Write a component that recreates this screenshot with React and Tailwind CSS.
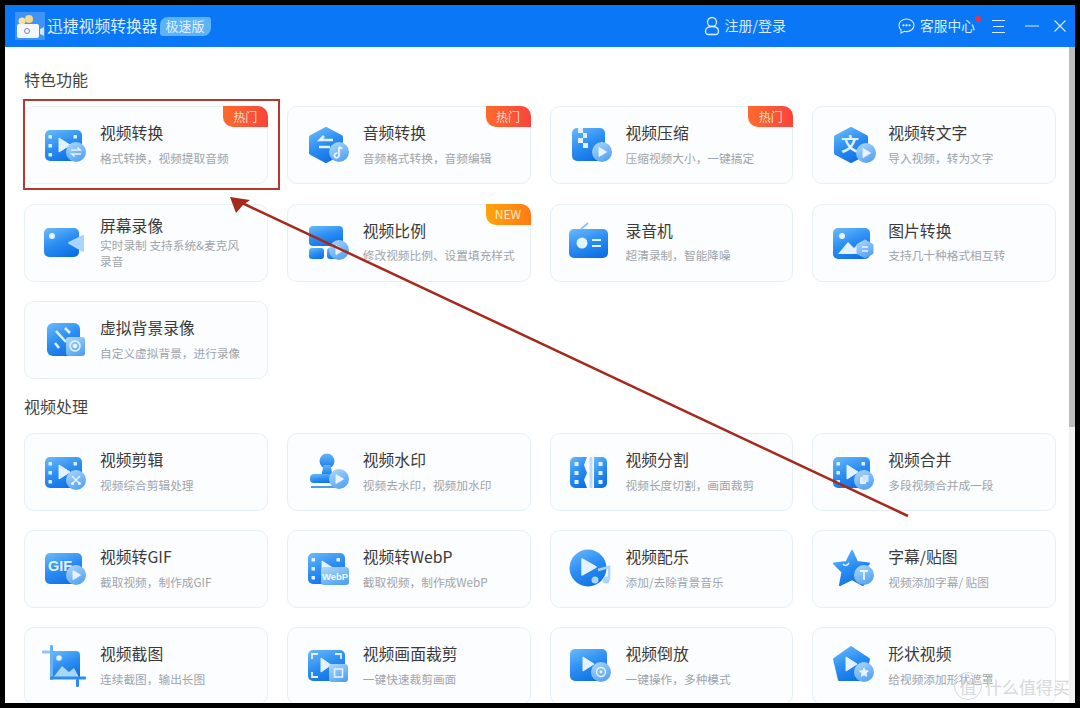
import React from "react";

const W = "#e4f1fe";
const Svg = ({ children }) => (
  <svg viewBox="0 0 44 44" className="w-[44px] h-[44px] shrink-0 overflow-visible">{children}</svg>
);
const B = ({ x = 33, y = 29, r = 10, children }) => (
  <g>
    <circle cx={x} cy={y} r={r} fill="url(#badge)" />
    {children}
  </g>
);
const BPlay = ({ x = 33, y = 29 }) => <path d={`M${x - 3} ${y - 4.5}L${x + 4.5} ${y}L${x - 3} ${y + 4.5}Z`} fill="#e8f4ff" strokeLinejoin="round" stroke="#e8f4ff" strokeWidth="1" />;
const Film = ({ y = 7 }) => (
  <g>
    <rect x="2" y={y} width="37" height="31" rx="5" fill="url(#main)" />
    {[7, 16, 25].map((d) => <rect key={d} x="5.5" y={y + d - 2} width="3.5" height="3.5" rx=".5" fill={W} />)}
    <rect x="30.5" y={y + 5} width="3.5" height="3.5" rx=".5" fill={W} />
    <path d={`M16 ${y + 8}L27 ${y + 15}L16 ${y + 22}Z`} fill={W} stroke={W} strokeLinejoin="round" />
  </g>
);
const Hex = () => <path d="M20 6L35 14V30L20 38L5 30V14Z" fill="url(#main)" stroke="url(#main)" strokeWidth="4" strokeLinejoin="round" />;

const icons = {
  convert: <Svg><Film /><B><path d="M28 27h9l-2.5-2.5M38 31h-9l2.5 2.5" fill="none" stroke="#e8f4ff" strokeWidth="1.6" /></B></Svg>,
  audio: <Svg><Hex /><path d="M27 17H14l4-4M13 24h11" fill="none" stroke={W} strokeWidth="2.6" /><B><path d="M33 24v8.5a2.3 2.3 0 1 1-1.6-2.2M33 24l3.5 1.5" fill="none" stroke="#e8f4ff" strokeWidth="1.8" /></B></Svg>,
  compress: <Svg><rect x="3" y="5" width="33" height="33" rx="5" fill="url(#main)" /><path d="M9 5h5v5h4v5h-4v5h5v5h-5v-5H9v-5h5v-5H9Z" fill={W} /><B><BPlay /></B></Svg>,
  text: <Svg><Hex /><text x="19" y="28" textAnchor="middle" fontSize="18" fontWeight="700" fill={W} fontFamily="'Noto Sans CJK SC',sans-serif">文</text><B x={35} y={30}><BPlay x={35} y={30} /></B></Svg>,
  screen: <Svg><rect x="1" y="7" width="35" height="29" rx="5" fill="url(#main)" /><circle cx="9" cy="15" r="3" fill={W} /><path d="M26 22L40 15V30Z" fill="#a9d4fb" stroke="#a9d4fb" strokeWidth="2" strokeLinejoin="round" /></Svg>,
  ratio: <Svg><rect x="3" y="5" width="34" height="20" rx="4" fill="url(#main)" /><rect x="3" y="27" width="15" height="11" rx="3" fill="url(#main)" /><rect x="21" y="27" width="16" height="11" rx="3" fill="url(#main)" /><B><BPlay /></B></Svg>,
  radio: <Svg><rect x="0" y="8" width="39" height="29" rx="5" fill="url(#main)" /><path d="M12 8L19 2" stroke="#8cc2f6" strokeWidth="1.8" /><circle cx="13" cy="22" r="5.5" fill={W} /><rect x="23" y="18" width="9" height="2" fill={W} /><rect x="23" y="24" width="9" height="2" fill={W} /></Svg>,
  image: <Svg><rect x="2" y="7" width="37" height="31" rx="5" fill="url(#main)" /><circle cx="11" cy="15" r="3" fill={W} /><path d="M7 33L17 21L23 27L27 23L33 33Z" fill={W} /><path d="M34 19l8 4.500v9l-8 4.500l-8-4.500v-9Z" fill="url(#badge)" stroke="url(#badge)" strokeLinejoin="round" /><path d="M31 26h6M37 30h-6" stroke="#e8f4ff" strokeWidth="1.3" /></Svg>,
  virtual: <Svg><rect x="4" y="5" width="33" height="33" rx="6" fill="url(#main)" /><path d="M13 13L23 24M22 10L27 15M12 25L16 30" stroke={W} strokeWidth="2.600" /><rect x="23" y="19" width="19" height="19" rx="3" fill="url(#badge)" /><circle cx="32" cy="28" r="5" fill="none" stroke="#e8f4ff" strokeWidth="1.500" /><circle cx="32" cy="28" r="2.300" fill="#e8f4ff" /></Svg>,
  cut: <Svg><Film /><B y={30}><path d="M29 26l7 7M37 26l-7 7" stroke="#e8f4ff" strokeWidth="1.400" /><circle cx="29.500" cy="33.500" r="1.500" fill="#e8f4ff" /><circle cx="36.500" cy="33.500" r="1.500" fill="#e8f4ff" /></B></Svg>,
  stamp: <Svg><circle cx="21" cy="11" r="7.500" fill="url(#stamp)" /><path d="M17.500 15h7l2 10h-11Z" fill="url(#stamp)" /><rect x="4" y="24" width="32" height="9" rx="4" fill="url(#main)" /><rect x="5" y="36" width="26" height="2" fill="#4a9cf0" /><B y={29}><BPlay y={29} /></B></Svg>,
  split: <Svg><path d="M6 7h12l-3 8 3 8-3 7 3 8H6a5 5 0 0 1-5-5V12a5 5 0 0 1 5-5Z" fill="url(#main)" /><path d="M33 7H25v31h8a5 5 0 0 0 5-5V12a5 5 0 0 0-5-5Z" fill="url(#main)" /><rect x="20.500" y="7" width="3" height="31" fill="#bcdcfa" />{[12, 21, 30].map((y) => <g key={y}><rect x="5.500" y={y} width="4" height="4" fill={W} /><rect x="29.500" y={y} width="4" height="4" fill={W} /></g>)}</Svg>,
  merge: <Svg><Film /><B y={30}><rect x="29" y="27" width="6" height="7" rx="1" fill="#e8f4ff" /><rect x="31.500" y="25" width="6" height="7" rx="1" fill="#cfe6fd" /></B></Svg>,
  gif: <Svg><rect x="2" y="6" width="37" height="31" rx="5" fill="url(#main)" /><text x="5" y="24" fontSize="14.500" fontWeight="700" fill={W} fontFamily="'Liberation Sans',sans-serif">GIF</text><B y={28}><BPlay y={28} /></B></Svg>,
  webp: <Svg><Film y={6} /><rect x="15" y="20" width="28" height="18" rx="3" fill="url(#badge)" /><text x="29" y="33" textAnchor="middle" fontSize="9.500" fontWeight="700" fill="#f0f8ff" fontFamily="'Liberation Sans',sans-serif">WebP</text></Svg>,
  music: <Svg><circle cx="19" cy="21" r="18.500" fill="url(#main)" /><path d="M13 12L27 20L13 28Z" fill={W} stroke={W} strokeLinejoin="round" strokeWidth="1.500" /><path d="M29 23l11-3v13" fill="none" stroke="#a9d4fb" strokeWidth="2.500" /><circle cx="26" cy="33" r="3.500" fill="#a9d4fb" /><circle cx="37" cy="33" r="3.500" fill="#a9d4fb" /></Svg>,
  star: <Svg><path d="M21 4L26 15L38 16.500L29.500 25L32 38L21 32L9 38L11.500 25L3 16.500L15.500 15Z" fill="url(#main)" stroke="url(#main)" strokeWidth="2" strokeLinejoin="round" /><path d="M12 17c2 2 4 2 6-1" fill="none" stroke={W} strokeWidth="1.500" /><B y={28}><path d="M29 24h8M33 24v9" stroke="#e8f4ff" strokeWidth="1.800" /></B></Svg>,
  crop: <Svg><path d="M9 7h24a4 4 0 0 1 4 4v24H9Z" fill="url(#main)" /><path d="M9 35L19 22L26 28L31 24L37 35Z" fill="#a9d6fb" /><circle cx="16" cy="14" r="2.800" fill={W} /><rect x="7" y="1" width="3" height="35" rx="1" fill="#69b1f6" /><rect x="7" y="32.500" width="36" height="3" rx="1" fill="#2f8cef" /><rect x="-1" y="6.500" width="8" height="3" rx="1" fill="#8cc4f8" /><rect x="33" y="35" width="3" height="8" rx="1" fill="#2f8cef" /></Svg>,
  cropv: <Svg><rect x="2" y="6" width="37" height="31" rx="5" fill="url(#main)" /><path d="M6 15v-5h6M29 10h6v5M6 28v5h6" fill="none" stroke={W} strokeWidth="1.800" /><path d="M15 14L25 21L15 28Z" fill={W} stroke={W} strokeLinejoin="round" /><rect x="23" y="20" width="19" height="18" rx="3" fill="url(#badge)" /><rect x="28.500" y="25" width="8" height="8" fill="none" stroke="#e8f4ff" strokeWidth="1.500" /></Svg>,
  rev: <Svg><rect x="1" y="5" width="37" height="32" rx="5" fill="url(#main)" /><path d="M14 13L25 20L14 27Z" fill={W} stroke={W} strokeLinejoin="round" /><B x={32} y={28}><circle cx="32" cy="28" r="4.500" fill="none" stroke="#e8f4ff" strokeWidth="1.400" /><circle cx="32" cy="28" r="1.400" fill="#e8f4ff" /></B></Svg>,
  shape: <Svg><path d="M20 3L38 15L33 36H8L3 15Z" fill="url(#main)" stroke="url(#main)" strokeWidth="2" strokeLinejoin="round" /><path d="M15 13L26 20L15 27Z" fill={W} stroke={W} strokeLinejoin="round" /><B y={28}><path d="M33 23l1.600 3.300 3.600.500-2.600 2.500.6 3.600-3.200-1.700-3.200 1.700.6-3.600-2.600-2.500 3.600-.5Z" fill="#e8f4ff" /></B></Svg>,
};

const featured = [
  ["convert", "视频转换", "格式转换，视频提取音频", "热门"],
  ["audio", "音频转换", "音频格式转换，音频编辑", "热门"],
  ["compress", "视频压缩", "压缩视频大小，一键搞定", "热门"],
  ["text", "视频转文字", "导入视频，转为文字"],
  ["screen", "屏幕录像", "实时录制 支持系统&麦克风录音"],
  ["ratio", "视频比例", "修改视频比例、设置填充样式", "NEW"],
  ["radio", "录音机", "超清录制，智能降噪"],
  ["image", "图片转换", "支持几十种格式相互转"],
  ["virtual", "虚拟背景录像", "自定义虚拟背景，进行录像"],
];
const video = [
  ["cut", "视频剪辑", "视频综合剪辑处理"],
  ["stamp", "视频水印", "视频去水印，视频加水印"],
  ["split", "视频分割", "视频长度切割，画面裁剪"],
  ["merge", "视频合并", "多段视频合并成一段"],
  ["gif", "视频转GIF", "截取视频，制作成GIF"],
  ["webp", "视频转WebP", "截取视频，制作成WebP"],
  ["music", "视频配乐", "添加/去除背景音乐"],
  ["star", "字幕/贴图", "视频添加字幕/ 贴图"],
  ["crop", "视频截图", "连续截图，输出长图"],
  ["cropv", "视频画面裁剪", "一键快速裁剪画面"],
  ["rev", "视频倒放", "一键操作，多种模式"],
  ["shape", "形状视频", "给视频添加形状遮罩"],
];

function Card({ item }) {
  const [icon, title, sub, tag] = item;
  const wrapped = icon === "screen";
  return (
    <div className="relative flex items-center gap-[13px] rounded-[10px] border border-[#e5f0f6] bg-[#fbfdff] pl-[18px]">
      {icons[icon]}
      <div className={`${wrapped ? "w-[148px]" : "w-[160px]"} pb-[2px]`}>
        <div className="text-[15.8px] leading-[22px] text-[#3a3a3a]">{title}</div>
        <div className={`${wrapped ? "" : "mt-[5.5px]"} text-[11.7px] leading-[16px] text-[#a0a4aa]`}>{sub}</div>
      </div>
      {tag === "热门" && (
        <div className="absolute -right-px -top-px flex h-[21px] w-[45px] items-center justify-center rounded-tr-[10px] rounded-bl-[10px] bg-gradient-to-r from-[#ff6a2b] to-[#f7443c] text-[12px] text-[#ffdcc8]">热门</div>
      )}
      {tag === "NEW" && (
        <div className="absolute -right-px -top-px flex h-[21px] w-[45px] items-center justify-center rounded-tr-[10px] rounded-bl-[10px] bg-gradient-to-r from-[#ffa30a] to-[#ff7a16] text-[12px] text-[#ffe9c8]">NEW</div>
      )}
    </div>
  );
}

export default function App() {
  return (
    <div className="relative h-[708px] w-[1080px] overflow-hidden bg-black p-[5px] font-['Noto_Sans_CJK_SC','Noto_Sans',sans-serif]">
      <svg className="absolute h-0 w-0">
        <defs>
          <linearGradient id="main" x1="0.2" y1="0" x2="0.7" y2="1">
            <stop offset="0" stopColor="#62b4fb" />
            <stop offset="0.5" stopColor="#2a8df2" />
            <stop offset="1" stopColor="#0f6fe4" />
          </linearGradient>
          <linearGradient id="stamp" x1="0.5" y1="0" x2="0.5" y2="1">
            <stop offset="0" stopColor="#62b4fb" />
            <stop offset="1" stopColor="#1a7bea" />
          </linearGradient>
          <linearGradient id="badge" x1="0.2" y1="0" x2="0.8" y2="1">
            <stop offset="0" stopColor="#a9d5fb" />
            <stop offset="1" stopColor="#4d9ff0" />
          </linearGradient>
        </defs>
      </svg>
      <div className="flex h-[698px] w-[1070px] flex-col bg-white">
        <header className="flex h-[42px] shrink-0 items-center bg-[#0a78f6] text-[#dcecff]">
          <svg viewBox="0 0 30 28" className="ml-[10px] h-[28px] w-[30px] shrink-0">
            <rect width="30" height="28" fill="#3f93f5" />
            <rect x="2" y="12" width="22" height="14" rx="2" fill="#f4f8fc" />
            <circle cx="7" cy="9" r="3.500" fill="#f6e3a8" />
            <circle cx="14" cy="7" r="4" fill="#f4d98c" />
            <circle cx="12" cy="19" r="2.500" fill="none" stroke="#6b8fb5" />
            <path d="M25 17l4-2v9l-4-2Z" fill="#cfe8ff" />
          </svg>
          <span className="ml-[2px] pb-[1px] text-[15.8px]">迅捷视频转换器</span>
          <span className="ml-[2px] flex h-[19px] w-[51px] items-center justify-center rounded-tl-[8px] rounded-br-[8px] rounded-tr-[3px] rounded-bl-[3px] bg-[#5eb2f8] pb-[1px] text-[13px] text-[#e2f1ff]">极速版</span>
          <svg viewBox="0 0 16 20" fill="none" stroke="#dcecff" strokeWidth="1.300" className="ml-[493px] h-[20px] w-[16px]">
            <circle cx="8" cy="6" r="4.500" />
            <path d="M8 10.500c-4 0-6.500 1.800-6.500 4.500s1.500 3.500 3 3.500h7c1.500 0 3-.8 3-3.500s-2.500-4.500-6.500-4.500Z" />
          </svg>
          <span className="ml-[5px] pb-[1px] text-[14px]">注册/登录</span>
          <svg viewBox="0 0 17 16" fill="none" stroke="#dcecff" strokeWidth="1.100" className="ml-[112px] h-[16px] w-[17px]">
            <path d="M8.500 1c4.200 0 7.500 2.800 7.500 6.300s-3.300 6.300-7.500 6.300c-.8 0-1.500-.1-2.200-.3L3 15v-3C1.800 10.900 1 9.200 1 7.300 1 3.800 4.300 1 8.500 1Z" />
            <circle cx="5.500" cy="7.300" r=".6" fill="#dcecff" />
            <circle cx="8.500" cy="7.300" r=".6" fill="#dcecff" />
            <circle cx="11.500" cy="7.300" r=".6" fill="#dcecff" />
          </svg>
          <span className="relative ml-[5px] pb-[1px] text-[13.7px]">
            客服中心
            <span className="absolute -right-[6px] top-[1px] h-[6px] w-[6px] rounded-full bg-[#e8344e]" />
          </span>
          <svg viewBox="0 0 13 13" stroke="#dcecff" className="ml-[17px] h-[13px] w-[13px]">
            <path d="M0 .5h13M1 6.500h11M0 12.500h13" />
          </svg>
          <svg viewBox="0 0 14 2" stroke="#dcecff" className="ml-[20px] h-[2px] w-[14px]">
            <path d="M0 1h14" />
          </svg>
          <svg viewBox="0 0 12 12" stroke="#dcecff" strokeWidth="1.100" className="ml-[15px] h-[12px] w-[12px]">
            <path d="M.5.500l11 11M11.500.500l-11 11" />
          </svg>
        </header>
        <div className="flex min-h-0 flex-1">
          <main className="min-w-0 flex-1 overflow-hidden pl-[19px] pr-[13px]">
            <h2 className="mb-[15px] mt-[20px] text-[16px] font-normal leading-[24px] text-[#444]">特色功能</h2>
            <div className="grid grid-cols-4 auto-rows-[78px] gap-x-[19px] gap-y-[19.5px]">
              {featured.map((it) => <Card key={it[0]} item={it} />)}
            </div>
            <h2 className="mb-[15px] mt-[15px] text-[16px] font-normal leading-[24px] text-[#444]">视频处理</h2>
            <div className="grid grid-cols-4 auto-rows-[78px] gap-x-[19px] gap-y-[19px]">
              {video.map((it) => <Card key={it[0]} item={it} />)}
            </div>
          </main>
          <div className="w-[6px] shrink-0 bg-[#f1f1f1]">
            <div className="h-[380px] bg-[#bdbdbd]" />
          </div>
        </div>
      </div>

      <div className="pointer-events-none absolute left-[23px] top-[99px] h-[91px] w-[257px] border-2 border-[#b23a30]" />
      <svg className="pointer-events-none absolute left-0 top-0 h-[708px] w-[1080px]" viewBox="0 0 1080 708">
        <path d="M908 516L240 202" stroke="#a5291c" strokeWidth="2.500" />
        <path d="M230 197L250 200L243 205L236 213Z" fill="#a5291c" />
      </svg>
      <div className="pointer-events-none absolute left-[954px] top-[672px] flex items-center gap-[3px] text-[#d8d8d8]">
        <span className="flex h-[28px] w-[28px] items-center justify-center rounded-full border border-[#d8d8d8] text-[17px] leading-none">值</span>
        <span className="pt-[2px] text-[17px] leading-[24px]">什么值得买</span>
      </div>
    </div>
  );
}
